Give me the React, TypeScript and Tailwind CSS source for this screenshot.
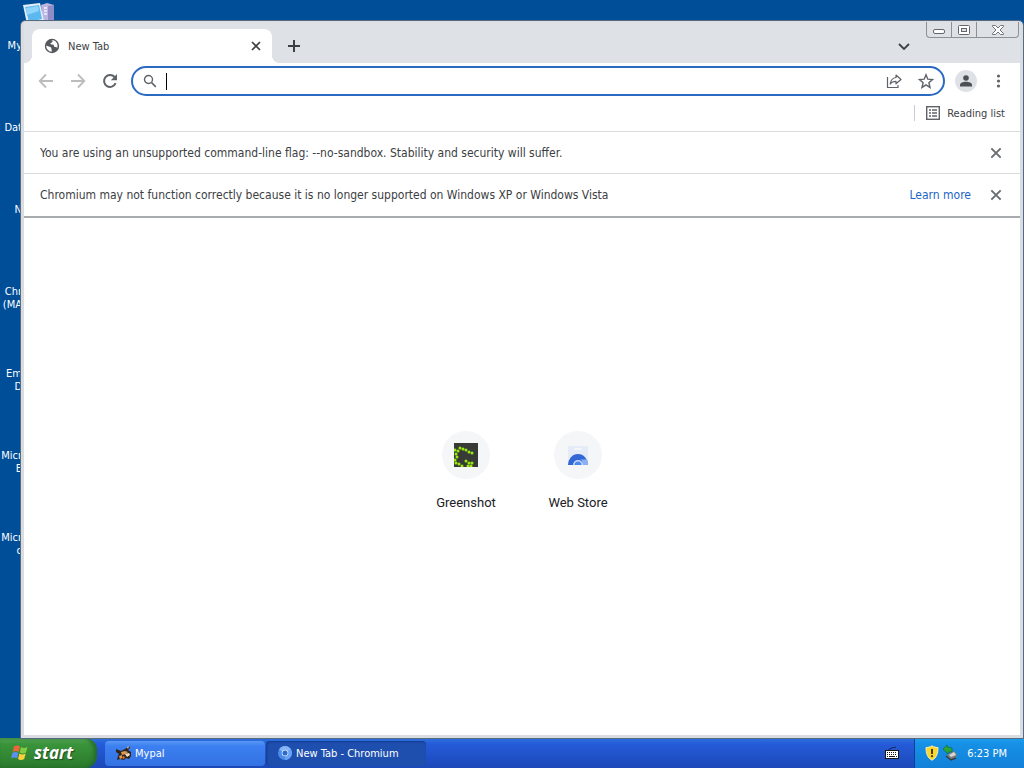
import { useState } from 'react';
import type { ReactNode } from 'react';

const uiFont = "font-['DejaVu_Sans_Condensed','Noto_Sans',sans-serif]";

const desktopLabels = [
  ['My'],
  ['Dat'],
  ['N'],
  ['Chr', '(MA'],
  ['Em', 'D'],
  ['Micr', 'E'],
  ['Micr', 'c'],
];

function ComputerIcon() {
  return (
    <svg width="32" height="24" viewBox="0 0 32 24" aria-hidden="true">
      <path d="M18 2l6-2 7 2v22H20z" fill="#b9b5e0" />
      <path d="M25 3l6-1v22h-6z" fill="#8f8cc8" />
      <path d="M21 5h3M21 8h3M21 11h3" stroke="#f2f0ff" strokeWidth="1.5" />
      <path d="M0 2l17-2 4 18-17 3z" fill="#e6eefb" />
      <path d="M2 4l14-2 3 14-13 3z" fill="#5cb9f0" />
      <path d="M3 5l12-2 1 5-12 4z" fill="#8fd4fa" />
    </svg>
  );
}

function GlobeIcon() {
  return (
    <svg width="16" height="16" viewBox="0 0 16 16" aria-hidden="true">
      <circle cx="8" cy="8" r="7.200" fill="#55595e" />
      <path d="M7 2.3c1.500 .2 2 .8 1.400 1.700-.5.800-1.500.600-1.900 1.300-.3.700.2 1.200 1.200 1.200 1.300 0 2.300.4 2.300 1.500 0 .8.700 1 1.500 1 .7 0 1.200.5 1.900.7A6 6 0 0 0 9.500 2.200z" fill="#fff" />
      <path d="M2.200 7.500l3.300 1.300c1.200.3 2 .8 1.900 1.800-.1.900.5 1.300.3 3.200A6 6 0 0 1 2.200 7.500z" fill="#fff" />
    </svg>
  );
}

function CloseIcon({ size = 12, color = '#3c4043' }: { size?: number; color?: string }) {
  return (
    <svg width={size} height={size} viewBox="0 0 12 12" aria-hidden="true">
      <path d="M2 2l8 8M10 2l-8 8" stroke={color} strokeWidth="1.7" />
    </svg>
  );
}

function ArrowIcon({ flip = false }: { flip?: boolean }) {
  return (
    <svg width="16" height="16" viewBox="0 0 16 16" className={flip ? 'rotate-180' : ''} aria-hidden="true">
      <path d="M15 8H2M8 1.500L1.700 8 8 14.500" fill="none" stroke="#babcbe" strokeWidth="1.800" />
    </svg>
  );
}

function ReloadIcon() {
  return (
    <svg width="16" height="16" viewBox="0 0 16 16" aria-hidden="true">
      <path d="M13.600 10.200A6 6 0 1 1 12.600 4" fill="none" stroke="#5f6368" strokeWidth="2" />
      <path d="M15 1v6.200H8.800z" fill="#5f6368" />
    </svg>
  );
}

function SearchIcon() {
  return (
    <svg width="14" height="14" viewBox="0 0 14 14" aria-hidden="true">
      <circle cx="5.500" cy="5.500" r="4" fill="none" stroke="#5f6368" strokeWidth="1.400" />
      <path d="M8.500 8.500l4.300 4.300" stroke="#5f6368" strokeWidth="1.700" />
    </svg>
  );
}

function ShareIcon() {
  return (
    <svg width="16" height="16" viewBox="0 0 16 16" aria-hidden="true">
      <path d="M1.500 4v10.500H12V12" fill="none" stroke="#5f6368" strokeWidth="1.200" />
      <path d="M10 2l5 4.500-5 4.300V8.300C7.500 8.300 5.500 9 4.200 11c.4-3.200 2.300-6 5.800-6.500z" fill="none" stroke="#5f6368" strokeWidth="1.200" strokeLinejoin="round" />
    </svg>
  );
}

function StarIcon() {
  return (
    <svg width="16" height="16" viewBox="0 0 16 16" aria-hidden="true">
      <path d="M8 1.800l1.800 4.400 4.700.4-3.600 3.100 1.100 4.700L8 11.900l-4 2.500 1.100-4.700L1.500 6.600l4.700-.4z" fill="none" stroke="#5f6368" strokeWidth="1.400" />
    </svg>
  );
}

function GreenshotIcon() {
  const dots = [
    [6, 5], [9, 6], [12, 7], [15, 9], [18, 10], [4, 8], [2, 11], [3, 14], [1, 7],
    [1, 17], [2, 20], [5, 21], [8, 23], [12, 18], [15, 20], [18, 20], [14, 23], [17, 23],
  ];
  return (
    <svg width="24" height="24" viewBox="0 0 24 24" aria-hidden="true">
      <rect width="24" height="24" fill="#363b36" />
      {dots.map(([x, y]) => (
        <circle key={`${x}-${y}`} cx={x} cy={y} r="1.500" fill="#9be80e" />
      ))}
    </svg>
  );
}

function WebStoreIcon() {
  return (
    <svg width="24" height="24" viewBox="0 0 24 24" aria-hidden="true">
      <path d="M2 3h20v19H2z" fill="#e6ecf7" />
      <rect x="8" y="5" width="8" height="2" rx="1" fill="#f5f6fa" />
      <path d="M2 22a10 11 0 0 1 20 0z" fill="#3268d5" />
      <path d="M15 22a3 3 0 0 0-1-5.500h7A10 10 0 0 1 22 22z" fill="#8bb0f3" />
      <path d="M7 22a5 5 0 0 1 10 0z" fill="#c9dcfb" />
      <path d="M8.500 22a3.500 3.500 0 0 1 7 0z" fill="#4d88ec" />
    </svg>
  );
}

function WindowsFlag() {
  return (
    <svg width="20" height="20" viewBox="0 0 20 20" aria-hidden="true">
      <path d="M4 3.500c2-1.500 4-1.300 6 0L8.700 9c-2-1.300-4-1.300-6 0z" fill="#f0653a" />
      <path d="M11 4c2 1.200 4 1.200 6.500 0l-1.500 5.500c-2.300 1.300-4.300 1.200-6.300 0z" fill="#7fce42" />
      <path d="M2.400 10c2-1.400 4-1.300 6 0L7 15.500c-2-1.300-4-1.200-6 0z" fill="#5c8ff0" />
      <path d="M9.400 10.500c2 1.200 4 1.200 6.300 0l-1.500 5.500c-2.300 1.300-4.300 1.200-6.200 0z" fill="#fbd03b" />
    </svg>
  );
}

function MypalIcon() {
  return (
    <svg width="16" height="16" viewBox="0 0 16 16" aria-hidden="true">
      <path d="M0 4l5 2 4-2 4-3 1 2-2 2 3 2v4l-2 3-3-1-2 2-4-1-3 1 1-4 1-2-3-2z" fill="#30241d" />
      <path d="M5 7l4-1 3 1-2 2-4 1zM3 11l3-1v3l-2 1z" fill="#d59b55" />
      <path d="M11 2l2-1-1 3zM9 9l4-1 1 2-3 2z" fill="#f3dfbe" />
      <path d="M7 11l2 1-1 2-2-1z" fill="#e9762d" />
    </svg>
  );
}

function ChromiumIcon() {
  return (
    <svg width="14" height="14" viewBox="0 0 14 14" aria-hidden="true">
      <circle cx="7" cy="7" r="7" fill="#4a8cea" />
      <path d="M7 7L1 3.400A7 7 0 0 1 13.100 3.700z" fill="#86b3f5" />
      <path d="M7 7l6.100-3.300A7 7 0 0 1 7 14z" fill="#6aa3f3" />
      <circle cx="7" cy="7" r="3.300" fill="#d5e5fc" />
      <circle cx="7" cy="7" r="2.500" fill="#2c69ce" />
    </svg>
  );
}

function KeyboardIcon() {
  return (
    <svg width="14" height="14" viewBox="0 0 14 14" aria-hidden="true">
      <path d="M4 4c0-2 2-1 3-2s2 0 4-1" fill="none" stroke="#17204a" />
      <rect x="0.500" y="4.500" width="13" height="8" fill="#fff" stroke="#161616" />
      <path d="M2 6.500h10M2 8.500h10" stroke="#161616" strokeDasharray="1 1" />
      <path d="M2 10.500h10" stroke="#161616" strokeDasharray="1 1 6 1" />
    </svg>
  );
}

function ShieldIcon() {
  return (
    <svg width="14" height="16" viewBox="0 0 14 16" aria-hidden="true">
      <path d="M7 .8c2 1.300 4 1.700 6 1.700 0 6-1.500 10.500-6 12.700C2.500 13 1 8.500 1 2.500c2 0 4-.4 6-1.700z" fill="#fbd72b" stroke="#f4eeb8" />
      <path d="M7 4v5" stroke="#4b3b0a" strokeWidth="2" />
      <circle cx="7" cy="11.200" r="1.100" fill="#4b3b0a" />
    </svg>
  );
}

function DeviceIcon() {
  return (
    <svg width="14" height="16" viewBox="0 0 14 16" aria-hidden="true">
      <path d="M5 9l6-3 3 3-1 4-5 2-4-3z" fill="#777c80" />
      <path d="M6 10l5-3 2 3-5 2z" fill="#d8d8d1" />
      <path d="M0 4l4-4v2l5 1v4H5v2z" fill="#2ba43a" stroke="#0e692d" strokeWidth=".6" />
      <path d="M3 11l5 4 5-2" fill="none" stroke="#343f43" strokeWidth="1.500" />
    </svg>
  );
}

function CaptionButtons() {
  const base = 'flex h-4 items-center justify-center border-b border-[#8c9196]';
  return (
    <div className="mr-px flex">
      <button aria-label="Minimize" className={`${base} w-[26px] rounded-bl border-x`}>
        <svg width="12" height="6" viewBox="0 0 12 6" className="mt-1">
          <rect x="0.500" y="0.500" width="11" height="4" rx="1.500" fill="#fff" stroke="#63676c" />
        </svg>
      </button>
      <button aria-label="Restore" className={`${base} w-[25px] border-r`}>
        <svg width="12" height="10" viewBox="0 0 12 10">
          <rect x="0.500" y="0.500" width="11" height="9" rx="1" fill="#fff" stroke="#63676c" />
          <rect x="3.500" y="3.500" width="5" height="3" fill="#dee1e6" stroke="#63676c" />
        </svg>
      </button>
      <button aria-label="Close window" className={`${base} w-[42px] rounded-br border-r`}>
        <svg width="12" height="10" viewBox="0 0 12 10">
          <path d="M.5.500h3L6 3 8.500.500h3v1L8 5l3.500 3.500v1h-3L6 7 3.500 9.500h-3v-1L4 5 .5 1.500z" fill="#fff" stroke="#63676c" strokeWidth=".9" />
        </svg>
      </button>
    </div>
  );
}

function InfoBar({ children, action, last }: { children: ReactNode; action?: ReactNode; last?: boolean }) {
  return (
    <div className={`flex items-center pr-[17px] pl-4 text-xs text-[#3c4043] ${last ? 'h-11 border-b-2 border-[#a9acaf]' : 'h-[42px] border-b border-[#dadce0]'}`}>
      <p className="flex-1 whitespace-nowrap">{children}</p>
      {action}
      <button aria-label="Dismiss" className="ml-[18px]">
        <CloseIcon size={14} color="#6b6e72" />
      </button>
    </div>
  );
}

function Shortcut({ label, children }: { label: string; children: ReactNode }) {
  return (
    <a href="#" className="flex w-28 flex-col items-center gap-4 font-[Roboto,sans-serif] text-[13px] leading-4 text-[#202124]">
      <span className="flex size-12 items-center justify-center rounded-full bg-[#f5f6f7]">{children}</span>
      {label}
    </a>
  );
}

function BrowserWindow() {
  const [query, setQuery] = useState('');

  return (
    <main className="mr-px flex min-w-0 flex-1 flex-col rounded-t border-x-[3px] border-t border-b-[3px] border-[#d9dce1] bg-white outline outline-[#566b80]">
      {/* Tab strip */}
      <header className="flex h-[41px] items-start bg-[#dee1e6]">
        <div className="relative mt-[7px] ml-2 flex h-[34px] w-60 items-center rounded-t-lg bg-white pr-[10px] pl-3 before:absolute before:bottom-0 before:-left-2 before:size-2 before:bg-[radial-gradient(circle_at_0_0,transparent_8px,white_8px)] after:absolute after:-right-2 after:bottom-0 after:size-2 after:bg-[radial-gradient(circle_at_100%_0,transparent_8px,white_8px)]">
          <GlobeIcon />
          <span className="ml-2 flex-1 pt-0.5 text-[11px] text-[#3c4043]">New Tab</span>
          <button aria-label="Close tab">
            <CloseIcon />
          </button>
        </div>
        <button aria-label="New tab" className="mt-[17px] ml-4">
          <svg width="12" height="14" viewBox="0 0 12 14">
            <path d="M6 1v12M0 7h12" stroke="#3c4043" strokeWidth="2" />
          </svg>
        </button>
        <button aria-label="Search tabs" className="mt-[17px] mr-4 ml-auto">
          <svg width="12" height="14" viewBox="0 0 12 14">
            <path d="M1 5l5 5 5-5" fill="none" stroke="#3c4043" strokeWidth="1.800" />
          </svg>
        </button>
        <CaptionButtons />
      </header>

      {/* Toolbar */}
      <div className="flex h-9 items-center px-[14px]">
        <div className="flex gap-4">
          <button aria-label="Back"><ArrowIcon /></button>
          <button aria-label="Forward"><ArrowIcon flip /></button>
          <button aria-label="Reload"><ReloadIcon /></button>
        </div>
        <div className="mr-[10px] ml-[13px] flex h-[30px] flex-1 items-center rounded-full border-2 border-[#2b6ac2] pr-[9px] pl-[10px]">
          <SearchIcon />
          <input
            aria-label="Address and search bar"
            value={query}
            onChange={(e) => setQuery(e.target.value)}
            className="ml-[9px] h-[17px] min-w-0 flex-1 border-l border-black text-sm outline-none"
          />
          <button aria-label="Share" className="mr-4"><ShareIcon /></button>
          <button aria-label="Bookmark this tab"><StarIcon /></button>
        </div>
        <button aria-label="Profile" className="flex size-[22px] items-center justify-center rounded-full bg-[#dee1e6]">
          <svg width="12" height="12" viewBox="0 0 12 12">
            <circle cx="6" cy="3" r="2.800" fill="#4d5156" />
            <path d="M0 11.500V10c0-2.200 3-3.300 6-3.300s6 1.100 6 3.300v1.500z" fill="#4d5156" />
          </svg>
        </button>
        <button aria-label="Menu" className="ml-[14px]">
          <svg width="15" height="16" viewBox="0 0 15 16" fill="#5f6368">
            <circle cx="7.500" cy="3" r="1.600" />
            <circle cx="7.500" cy="8" r="1.600" />
            <circle cx="7.500" cy="13" r="1.600" />
          </svg>
        </button>
      </div>

      {/* Bookmarks bar */}
      <div className="flex h-[33px] items-center justify-end border-b border-[#dadce0] pr-[15px] pb-1">
        <span className="mr-[10px] h-4 w-px bg-[#c9ccd0]" />
        <button className="flex items-center gap-[6px] text-[11px] text-[#3c4043]">
          <svg width="16" height="16" viewBox="0 0 16 16" aria-hidden="true">
            <rect x="1.700" y="1.700" width="12.600" height="12.600" fill="none" stroke="#5f6368" strokeWidth="1.400" />
            <path d="M4 5h2M4 8h2M4 11h2M7 5h5M7 8h5M7 11h5" stroke="#5f6368" strokeWidth="1.400" />
          </svg>
          <span className="pt-0.5">Reading list</span>
        </button>
      </div>

      <InfoBar>
        You are using an unsupported command-line flag: --no-sandbox. Stability and security will suffer.
      </InfoBar>
      <InfoBar last action={<a href="#" className="text-[#1a66c8]">Learn more</a>}>
        Chromium may not function correctly because it is no longer supported on Windows XP or Windows Vista
      </InfoBar>

      {/* New tab page */}
      <section className="flex flex-1 items-center justify-center pb-3">
        <Shortcut label="Greenshot"><GreenshotIcon /></Shortcut>
        <Shortcut label="Web Store"><WebStoreIcon /></Shortcut>
      </section>
    </main>
  );
}

function Taskbar() {
  const task = 'flex h-[25px] w-40 items-center rounded-sm text-[11px] text-white';
  return (
    <footer className="flex h-[30px] items-center bg-linear-to-b from-[#2f73df] via-[#255bd9] via-20% to-[#1c48b8]">
      <button className="flex h-full w-[97px] items-center gap-1 rounded-r-xl bg-linear-to-b from-[#59a95a] via-[#3a943b] via-20% to-[#2b7a2c] pl-[10px] font-['Open_Sans',sans-serif] text-[17px] font-bold text-white italic shadow-[inset_-3px_0_4px_#23692a] text-shadow-[1px_1px_1px_#1d4d1e]">
        <WindowsFlag />
        start
      </button>
      <button className={`${task} ml-2 gap-[3px] bg-linear-to-b from-[#5a98f5] via-[#3c7ff0] via-20% to-[#3472e2] pl-[11px]`}>
        <MypalIcon />
        <span className="pt-0.5">Mypal</span>
      </button>
      <button className={`${task} ml-px gap-1 bg-[#1e4fae] pl-3 shadow-[inset_1px_1px_2px_#143a8c]`}>
        <ChromiumIcon />
        <span className="pt-0.5">New Tab - Chromium</span>
      </button>
      <span className="mr-[15px] ml-auto"><KeyboardIcon /></span>
      <div className="flex h-full items-center border-l border-[#0c3f9c] bg-linear-to-b from-[#1d9ff0] via-[#1690e6] via-20% to-[#1280d8] pr-[17px] pl-[10px] text-[11px] text-white">
        <ShieldIcon />
        <span className="mr-[10px] ml-1"><DeviceIcon /></span>
        <time className="pt-0.5">6:23 PM</time>
      </div>
    </footer>
  );
}

export default function App() {
  return (
    <div className={`relative flex min-h-screen flex-col bg-[#004e98] ${uiFont}`}>
      <div className="absolute top-[3px] left-[23px]">
        <ComputerIcon />
      </div>
      <div className="relative flex flex-1 pt-[21px]">
        <ul className="w-[21px] shrink-0 overflow-hidden pt-[18px] text-[11px] leading-[13px] text-white">
          {desktopLabels.map((lines, i) => (
            <li key={i} className="-mr-px flex h-[82px] flex-col items-end whitespace-nowrap">
              {lines.map((line) => (
                <span key={line}>{line}</span>
              ))}
            </li>
          ))}
        </ul>
        <BrowserWindow />
      </div>
      <Taskbar />
    </div>
  );
}
